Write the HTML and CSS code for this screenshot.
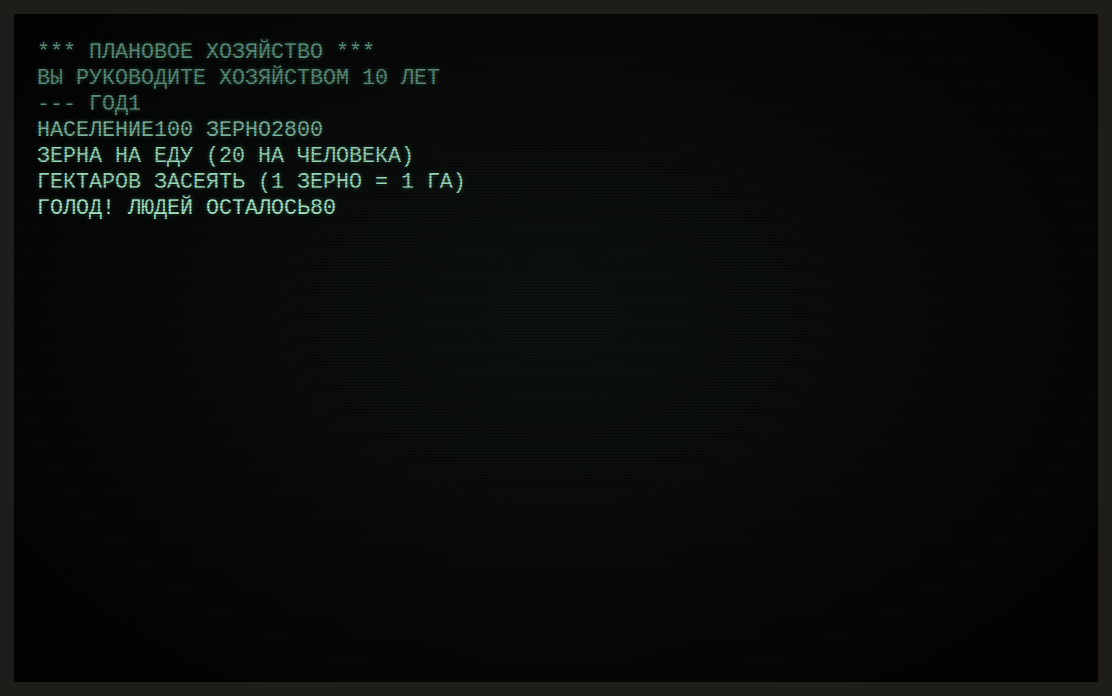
FILE: index.html
```html
<!DOCTYPE html>
<html lang="ru">
<head>
<meta charset="utf-8">
<title>Плановое хозяйство</title>
<link rel="stylesheet" href="styles.css">
</head>
<body>
<main class="screen">
  <div class="output">
    <div class="line dim">*** ПЛАНОВОЕ ХОЗЯЙСТВО ***</div>
    <div class="line dim">ВЫ РУКОВОДИТЕ ХОЗЯЙСТВОМ 10 ЛЕТ</div>
    <div class="line dim">--- ГОД1</div>
    <div class="line mid">НАСЕЛЕНИЕ100 ЗЕРНО2800</div>
    <div class="line bright">ЗЕРНА НА ЕДУ (20 НА ЧЕЛОВЕКА)</div>
    <div class="line bright">ГЕКТАРОВ ЗАСЕЯТЬ (1 ЗЕРНО = 1 ГА)</div>
    <div class="line brightest">ГОЛОД! ЛЮДЕЙ ОСТАЛОСЬ80</div>
  </div>
</main>
</body>
</html>
```
FILE: styles.css
```css
html, body {
  margin: 0;
  padding: 0;
  background: #1e1d19;
}
body {
  padding: 14px;
  box-sizing: border-box;
  width: 1112px;
  height: 696px;
}
.screen {
  position: relative;
  height: 668px;
  box-sizing: border-box;
  padding: 26px 23px;
  background: radial-gradient(ellipse at 50% 45%, #0c1210 0%, #080b0a 45%, #030303 85%, #020202 100%);
  overflow: hidden;
}
.screen::after {
  content: "";
  position: absolute;
  inset: 0;
  pointer-events: none;
  background: repeating-linear-gradient(to bottom, rgba(0,0,0,0) 0px, rgba(0,0,0,0) 2px, rgba(0,0,0,0.28) 2px, rgba(0,0,0,0.28) 3px);
}
.output {
  font-family: "Liberation Mono", "DejaVu Sans Mono", monospace;
  font-size: 21.67px;
  line-height: 26px;
}
.line {
  white-space: pre;
  text-shadow: 0 0 4px rgba(110, 230, 170, 0.35);
}
.dim { color: #5b8a78; }
.mid { color: #7cad97; }
.bright { color: #98d2b6; }
.brightest { color: #a6e0c3; }
```
